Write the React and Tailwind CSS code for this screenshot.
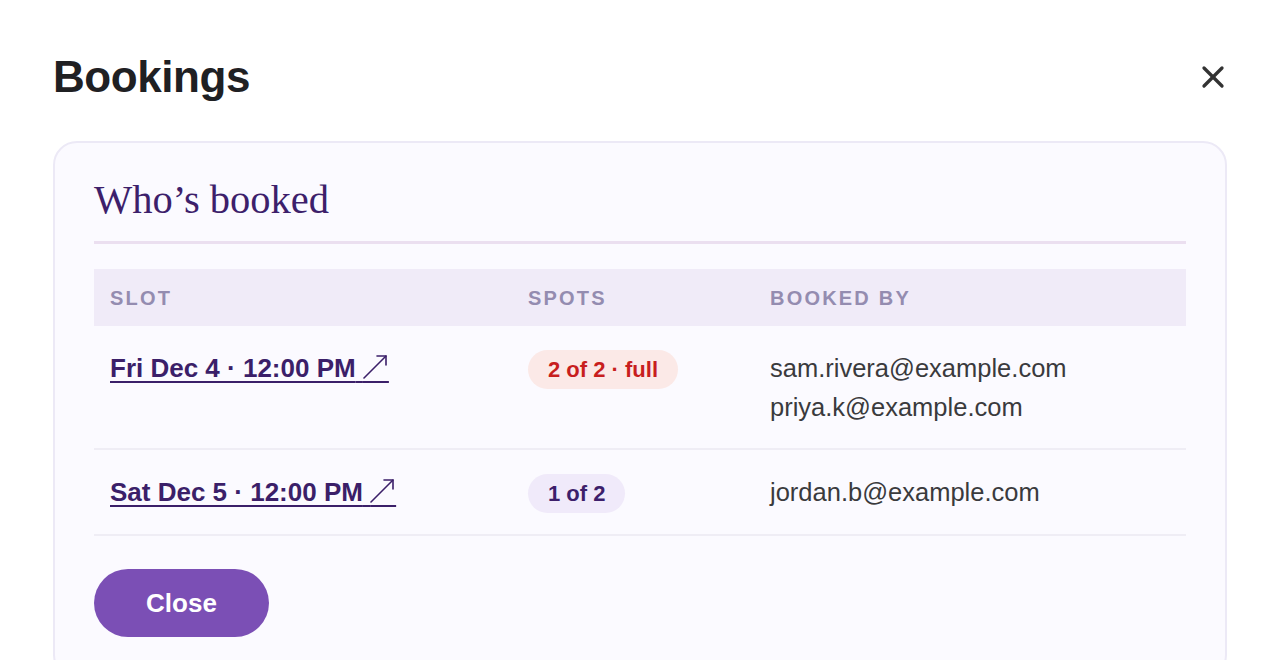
import React from 'react';
import { X } from 'lucide-react';

const bookings = [
  {
    slot: 'Fri Dec 4 · 12:00 PM',
    spots: '2 of 2 · full',
    full: true,
    people: ['sam.rivera@example.com', 'priya.k@example.com'],
  },
  {
    slot: 'Sat Dec 5 · 12:00 PM',
    spots: '1 of 2',
    full: false,
    people: ['jordan.b@example.com'],
  },
];

// thin north-east arrow drawn over an underlined em space so the link underline runs beneath it
const ArrowNE = () => (
  <span className="relative">
    {'\u2003'}
    <svg
      className="absolute bottom-[4px] left-0 h-[24px] w-[24px]"
      viewBox="0 0 24 24"
      fill="none"
      stroke="currentColor"
      strokeWidth="1.6"
      strokeLinecap="round"
      strokeLinejoin="round"
    >
      <path d="M1 23 L23 1" />
      <path d="M14 1 H23 V10" />
    </svg>
  </span>
);

const App = () => {
  return (
    <div className="min-h-screen bg-white px-[53px] pt-[50px] font-['Liberation_Sans',Arial,sans-serif]">
      {/* Header */}
      <div className="flex h-[53px] items-center justify-between">
        <h1 className="text-[44px] font-bold leading-none tracking-[-0.01em] text-[#1f2023]">Bookings</h1>
        <button className="-mr-[4px] text-[#333]">
          <X className="h-[36px] w-[36px]" strokeWidth={2.2} />
        </button>
      </div>

      {/* Card */}
      <div className="mt-[38px] rounded-[24px] border-2 border-[#ece9f6] bg-[#fbfaff] px-[39px] pb-[40px] pt-[33px]">
        <h2 className="font-['Liberation_Serif',Georgia,serif] text-[40.5px] leading-[48px] text-[#3d1f6b]">
          Who’s booked
        </h2>
        <div className="mt-[17px] h-[3px] bg-[#ebdff0]" />

        {/* Table */}
        <div className="mt-[25px]">
          <div className="flex h-[57px] items-center bg-[#f0ebf8] text-[20px] font-bold tracking-[0.11em] text-[#948cb0]">
            <div className="w-[418px] pl-[16px]">SLOT</div>
            <div className="w-[242px] pl-[16px]">SPOTS</div>
            <div className="flex-1 pl-[16px]">BOOKED BY</div>
          </div>

          {bookings.map((b) => (
            <div key={b.slot} className="flex border-b-2 border-[#efedf5] pb-[21px] pt-[23px] text-[26px] leading-[39px]">
              <div className="w-[418px] pl-[16px]">
                <a
                  href="#"
                  className="font-bold text-[#3b1f69] underline decoration-2 underline-offset-[4px]"
                >
                  {b.slot} <ArrowNE />
                </a>
              </div>
              <div className="w-[242px] pl-[16px]">
                <span
                  className={`inline-flex h-[39px] items-center rounded-full px-[20px] text-[22px] font-bold ${
                    b.full ? 'bg-[#fbe9e7] text-[#c81e1e]' : 'bg-[#f0eafa] text-[#3d1f6b]'
                  }`}
                >
                  {b.spots}
                </span>
              </div>
              <div className="flex-1 pl-[16px] text-[25.5px] text-[#3a3a3d]">
                {b.people.map((p) => (
                  <div key={p}>{p}</div>
                ))}
              </div>
            </div>
          ))}
        </div>

        <button className="mt-[33px] flex h-[68px] w-[175px] items-center justify-center rounded-full bg-[#7b4fb5] text-[26px] font-bold text-white">
          Close
        </button>
      </div>
    </div>
  );
};

export default App;
